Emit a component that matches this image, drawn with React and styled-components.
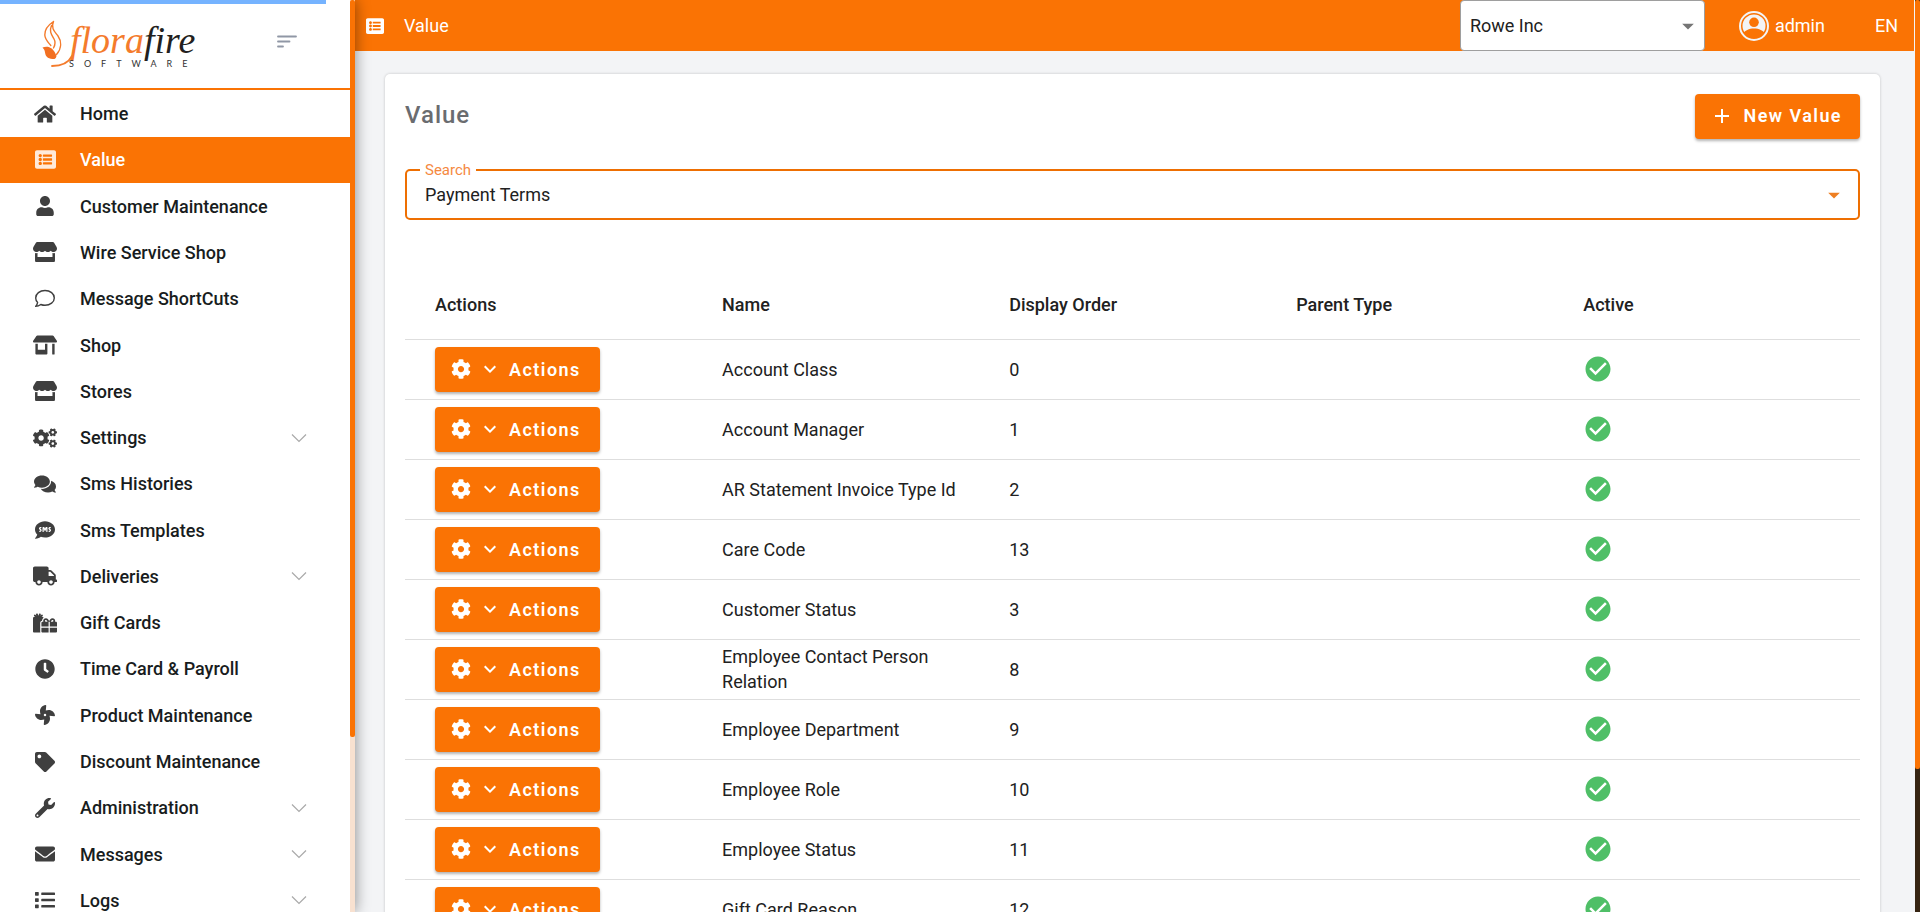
import React from 'react';
import styled, { createGlobalStyle } from 'styled-components';
import {
  FaHome, FaListAlt, FaUser, FaStore, FaStoreAlt, FaCogs, FaComments, FaSms, FaTruck,
  FaGifts, FaClock, FaFan, FaTag, FaWrench, FaEnvelope, FaList, FaCog,
} from 'react-icons/fa';
import { MdCheckCircle, MdAdd, MdExpandMore, MdArrowDropDown } from 'react-icons/md';

const orange = '#fa7304';

const GlobalStyle = createGlobalStyle`
  *, *::before, *::after { box-sizing: border-box; }
  body {
    margin: 0;
    background: #f3f4f6;
    color: #212121;
    font-family: Roboto, "Liberation Sans", sans-serif;
    font-size: 18px;
    overflow: hidden;
  }
  button, select { font: inherit; color: inherit; }
`;

const Page = styled.div`
  display: flex;
  height: 100vh;
`;

const Sidebar = styled.aside`
  position: relative;
  z-index: 2;
  display: flex;
  flex: none;
  width: 355px;
  background: #fff;
  box-shadow: 0 0 14px rgba(0, 0, 0, 0.45);
`;

const SidebarBody = styled.div`
  flex: 1;
  display: flex;
  flex-direction: column;
  overflow: hidden;
`;

const ScrollTrack = styled.div`
  flex: none;
  width: 5px;
  background: ${(p) => p.$track};
`;

const ScrollThumb = styled.div`
  height: calc(100% - ${(p) => p.$rest});
  border-radius: 2px;
  background: ${orange};
`;

const Progress = styled.div`
  flex: none;
  width: 326px;
  height: 4px;
  background: #75b3ff;
`;

const Brand = styled.div`
  flex: none;
  display: flex;
  align-items: flex-start;
  justify-content: space-between;
  height: 86px;
  padding: 12px 53px 0 36px;
  border-bottom: 2px solid ${orange};
`;

const IconButton = styled.button`
  display: flex;
  margin-top: 19px;
  padding: 0;
  border: 0;
  background: none;
  color: #9097a5;
`;

const Nav = styled.nav`
  flex: 1;
  display: grid;
  grid-auto-rows: minmax(45px, 1fr);
  gap: 1px;
  margin: 1px 0 -11px;
`;

const NavLink = styled.a`
  display: grid;
  grid-template-columns: 26px 1fr 16px;
  column-gap: 22px;
  align-items: center;
  padding: 0 43px 0 32px;
  background: ${(p) => (p.$active ? orange : 'transparent')};
  color: ${(p) => (p.$active ? '#fff' : '#181c20')};
  font-weight: 500;
  text-decoration: none;

  > svg:first-child {
    justify-self: center;
    color: ${(p) => (p.$active ? '#ffead9' : '#3f3f3f')};
  }
`;

const Main = styled.div`
  flex: 1;
  min-width: 0;
  margin-right: 1px;
  overflow: hidden;
`;

const TopBar = styled.header`
  display: flex;
  align-items: center;
  height: 51px;
  padding: 0 16px 0 11px;
  background: ${orange};
  color: #fff;
`;

const Crumb = styled.div`
  flex: 1;
  display: flex;
  align-items: center;
  gap: 20px;
`;

const CompanyField = styled.div`
  position: relative;
  width: 245px;
  height: 51px;
  color: #757575;
`;

const CompanySelect = styled.select`
  appearance: none;
  width: 100%;
  height: 100%;
  padding: 0 9px;
  border: 1px solid #9e9e9e;
  border-radius: 4px;
  background: #fff;
  color: #212121;
`;

const Arrow = styled(MdArrowDropDown)`
  position: absolute;
  top: 50%;
  right: ${(p) => p.$right};
  transform: translateY(-50%);
  pointer-events: none;
`;

const UserButton = styled.button`
  display: flex;
  align-items: center;
  gap: 6px;
  margin-left: 34px;
  padding: 0;
  border: 0;
  background: none;
`;

const LangButton = styled.button`
  margin-left: 50px;
  padding: 0;
  border: 0;
  background: none;
`;

const Card = styled.main`
  margin: 23px 34px 0 30px;
  padding: 20px;
  min-height: 100vh;
  border-radius: 5px;
  background: #fff;
  box-shadow: 0 0 3px rgba(0, 0, 0, 0.2);
`;

const CardHead = styled.div`
  display: flex;
  align-items: flex-start;
  justify-content: space-between;
`;

const Title = styled.h1`
  margin: 7px 0 0;
  color: #6a6c70;
  font-size: 24px;
  line-height: 28px;
  font-weight: 500;
  letter-spacing: 1px;
`;

const Button = styled.button`
  display: flex;
  align-items: center;
  gap: ${(p) => p.$gap};
  height: 45px;
  padding: ${(p) => p.$pad};
  border: 0;
  border-radius: 4px;
  background: ${orange};
  box-shadow: 0 2px 3px rgba(0, 0, 0, 0.3);
  color: #fff;
  font-weight: 600;
  letter-spacing: 0.08em;
  white-space: nowrap;
`;

const SearchField = styled.div`
  position: relative;
  height: 51px;
  margin: 30px 0 50px;
  color: #ee7f22;
`;

const SearchLabel = styled.label`
  position: absolute;
  top: -8px;
  left: 15px;
  padding: 0 5px;
  background: #fff;
  color: #f5893f;
  font-size: 15px;
  line-height: 18px;
`;

const SearchSelect = styled.select`
  appearance: none;
  width: 100%;
  height: 100%;
  padding: 0 18px;
  border: 2px solid #ee6f02;
  border-radius: 5px;
  background: #fff;
  color: #212121;
`;

const Table = styled.table`
  width: 100%;
  border-collapse: collapse;
  table-layout: fixed;
`;

const Col = styled.col`
  width: 19.73%;
`;

const Th = styled.th`
  height: 69px;
  padding: 0 10px 0 30px;
  border-bottom: 1px solid #dedede;
  font-weight: 500;
  text-align: left;
`;

const Td = styled.td`
  height: 60px;
  padding: 0 10px 0 30px;
  border-bottom: 1px solid #dedede;
  line-height: 25px;

  > svg { display: block; }
`;

const ThinComment = () => (
  <svg width="20" height="20" viewBox="0 0 20 20" fill="none" stroke="currentColor" strokeWidth="1.400" strokeLinejoin="round">
    <path d="M10 1.500c5.200 0 9.300 3.300 9.300 7.400S15.200 16.300 10 16.300c-1.500 0-2.900-.3-4.200-.8-1.400 1.100-3.200 1.900-5.200 1.900 1-1 1.800-2.400 2-4C1.300 12.100.7 10.600.7 8.900.7 4.800 4.800 1.500 10 1.500z" />
  </svg>
);

const ThinChevron = () => (
  <svg width="16" height="10" viewBox="0 0 16 10" fill="none" stroke="#a9a9a9" strokeWidth="1.2">
    <path d="M1 1.500 8 8.500 15 1.500" />
  </svg>
);

const MenuLines = () => (
  <svg width="20" height="13" viewBox="0 0 20 13" fill="none" stroke="currentColor" strokeWidth="1.800" strokeLinecap="round">
    <path d="M1 1.500H19M1 6.500H12.500M1 11.500H6" />
  </svg>
);

const Avatar = () => (
  <svg width="30" height="30" viewBox="0 0 30 30" aria-hidden="true">
    <circle cx="15" cy="15" r="11.500" fill="#f3f4f6" />
    <circle cx="15" cy="11.300" r="4.800" fill={orange} />
    <path fill={orange} d="M3 23.500C6 19.300 10 17.600 15 17.600S24 19.300 27 23.500L22 28H8z" />
    <circle cx="15" cy="15" r="14" fill="none" stroke="#f3f4f6" strokeWidth="2" />
  </svg>
);

const Logo = () => (
  <svg width="162" height="60" viewBox="0 0 162 60" role="img" aria-label="florafire software">
    <path fill="none" stroke="#f47b2c" strokeWidth="1.400" strokeLinecap="round" d="M17.500 5.500C13 8.500 8.500 13 8.800 19c.2 4.500 3.200 7 6 10.500M17.500 5.500c-3 7 1.500 10.500 4.500 14.500 3.500 5 4 12-1.500 18.500M15.500 9.500c-2.500 6 0 9 2.300 13 2 3.500 1.700 6-.3 9.500" />
    <path fill="#f26f21" d="M6.500 31.500c5-2 11-.5 14 8.500-.3 1.700-1 2.500-2 3-5.500 0-8.800-1.500-9.500-6.500-.2-2-1-3.500-2.500-5z" />
    <text x="34" y="37" fontFamily="Liberation Serif, serif" fontStyle="italic" fontSize="38" fill="#f47b2c">flora<tspan fill="#231f20">fire</tspan></text>
    <path fill="none" stroke="#f47b2c" strokeWidth="1.800" strokeLinecap="round" d="M36 40c-3 6-8 10-20 10" />
    <text x="33" y="51" fontFamily="Lato, sans-serif" fontSize="9" letterSpacing="10" fill="#333">SOFTWARE</text>
  </svg>
);

const navItems = [
  { label: 'Home', Icon: FaHome, size: 22 },
  { label: 'Value', Icon: FaListAlt, size: 21, active: true },
  { label: 'Customer Maintenance', Icon: FaUser },
  { label: 'Wire Service Shop', Icon: FaStore, size: 24 },
  { label: 'Message ShortCuts', Icon: ThinComment },
  { label: 'Shop', Icon: FaStoreAlt, size: 24 },
  { label: 'Stores', Icon: FaStore, size: 24 },
  { label: 'Settings', Icon: FaCogs, size: 24, expandable: true },
  { label: 'Sms Histories', Icon: FaComments, size: 22 },
  { label: 'Sms Templates', Icon: FaSms },
  { label: 'Deliveries', Icon: FaTruck, size: 24, expandable: true },
  { label: 'Gift Cards', Icon: FaGifts, size: 24 },
  { label: 'Time Card & Payroll', Icon: FaClock },
  { label: 'Product Maintenance', Icon: FaFan },
  { label: 'Discount Maintenance', Icon: FaTag },
  { label: 'Administration', Icon: FaWrench, expandable: true },
  { label: 'Messages', Icon: FaEnvelope, expandable: true },
  { label: 'Logs', Icon: FaList, expandable: true },
];

const rows = [
  ['Account Class', 0],
  ['Account Manager', 1],
  ['AR Statement Invoice Type Id', 2],
  ['Care Code', 13],
  ['Customer Status', 3],
  ['Employee Contact Person Relation', 8],
  ['Employee Department', 9],
  ['Employee Role', 10],
  ['Employee Status', 11],
  ['Gift Card Reason', 12],
];

export default function App() {
  return (
    <>
      <GlobalStyle />
      <Page>
        <Sidebar>
          <SidebarBody>
            <Progress />
            <Brand>
              <Logo />
              <IconButton type="button" aria-label="Collapse menu"><MenuLines /></IconButton>
            </Brand>
            <Nav>
              {navItems.map(({ label, Icon, size = 20, active, expandable }) => (
                <NavLink key={label} href="#" $active={active}>
                  <Icon size={size} />
                  {label}
                  {expandable && <ThinChevron />}
                </NavLink>
              ))}
            </Nav>
          </SidebarBody>
          <ScrollTrack $track="#f8e1d0"><ScrollThumb $rest="175px" /></ScrollTrack>
        </Sidebar>
        <Main>
          <TopBar>
            <Crumb><FaListAlt size={18} />Value</Crumb>
            <CompanyField>
              <CompanySelect aria-label="Company"><option>Rowe Inc</option></CompanySelect>
              <Arrow size={28} $right="3px" />
            </CompanyField>
            <UserButton type="button"><Avatar />admin</UserButton>
            <LangButton type="button">EN</LangButton>
          </TopBar>
          <Card>
            <CardHead>
              <Title>Value</Title>
              <Button type="button" $gap="9px" $pad="0 18px 2px 15px"><MdAdd size={24} />New Value</Button>
            </CardHead>
            <SearchField>
              <SearchLabel htmlFor="search">Search</SearchLabel>
              <SearchSelect id="search"><option>Payment Terms</option></SearchSelect>
              <Arrow size={28} $right="12px" />
            </SearchField>
            <Table>
              <colgroup><Col /><Col /><Col /><Col /><col /></colgroup>
              <thead>
                <tr><Th>Actions</Th><Th>Name</Th><Th>Display Order</Th><Th>Parent Type</Th><Th>Active</Th></tr>
              </thead>
              <tbody>
                {rows.map(([name, order]) => (
                  <tr key={name}>
                    <Td>
                      <Button type="button" $gap="7px" $pad="0 19px 0 16px">
                        <FaCog size={20} /><MdExpandMore size={24} />Actions
                      </Button>
                    </Td>
                    <Td>{name}</Td>
                    <Td>{order}</Td>
                    <Td />
                    <Td><MdCheckCircle size={30} color="#4fbf67" /></Td>
                  </tr>
                ))}
              </tbody>
            </Table>
          </Card>
        </Main>
        <ScrollTrack $track="#362412"><ScrollThumb $rest="143px" /></ScrollTrack>
      </Page>
    </>
  );
}
